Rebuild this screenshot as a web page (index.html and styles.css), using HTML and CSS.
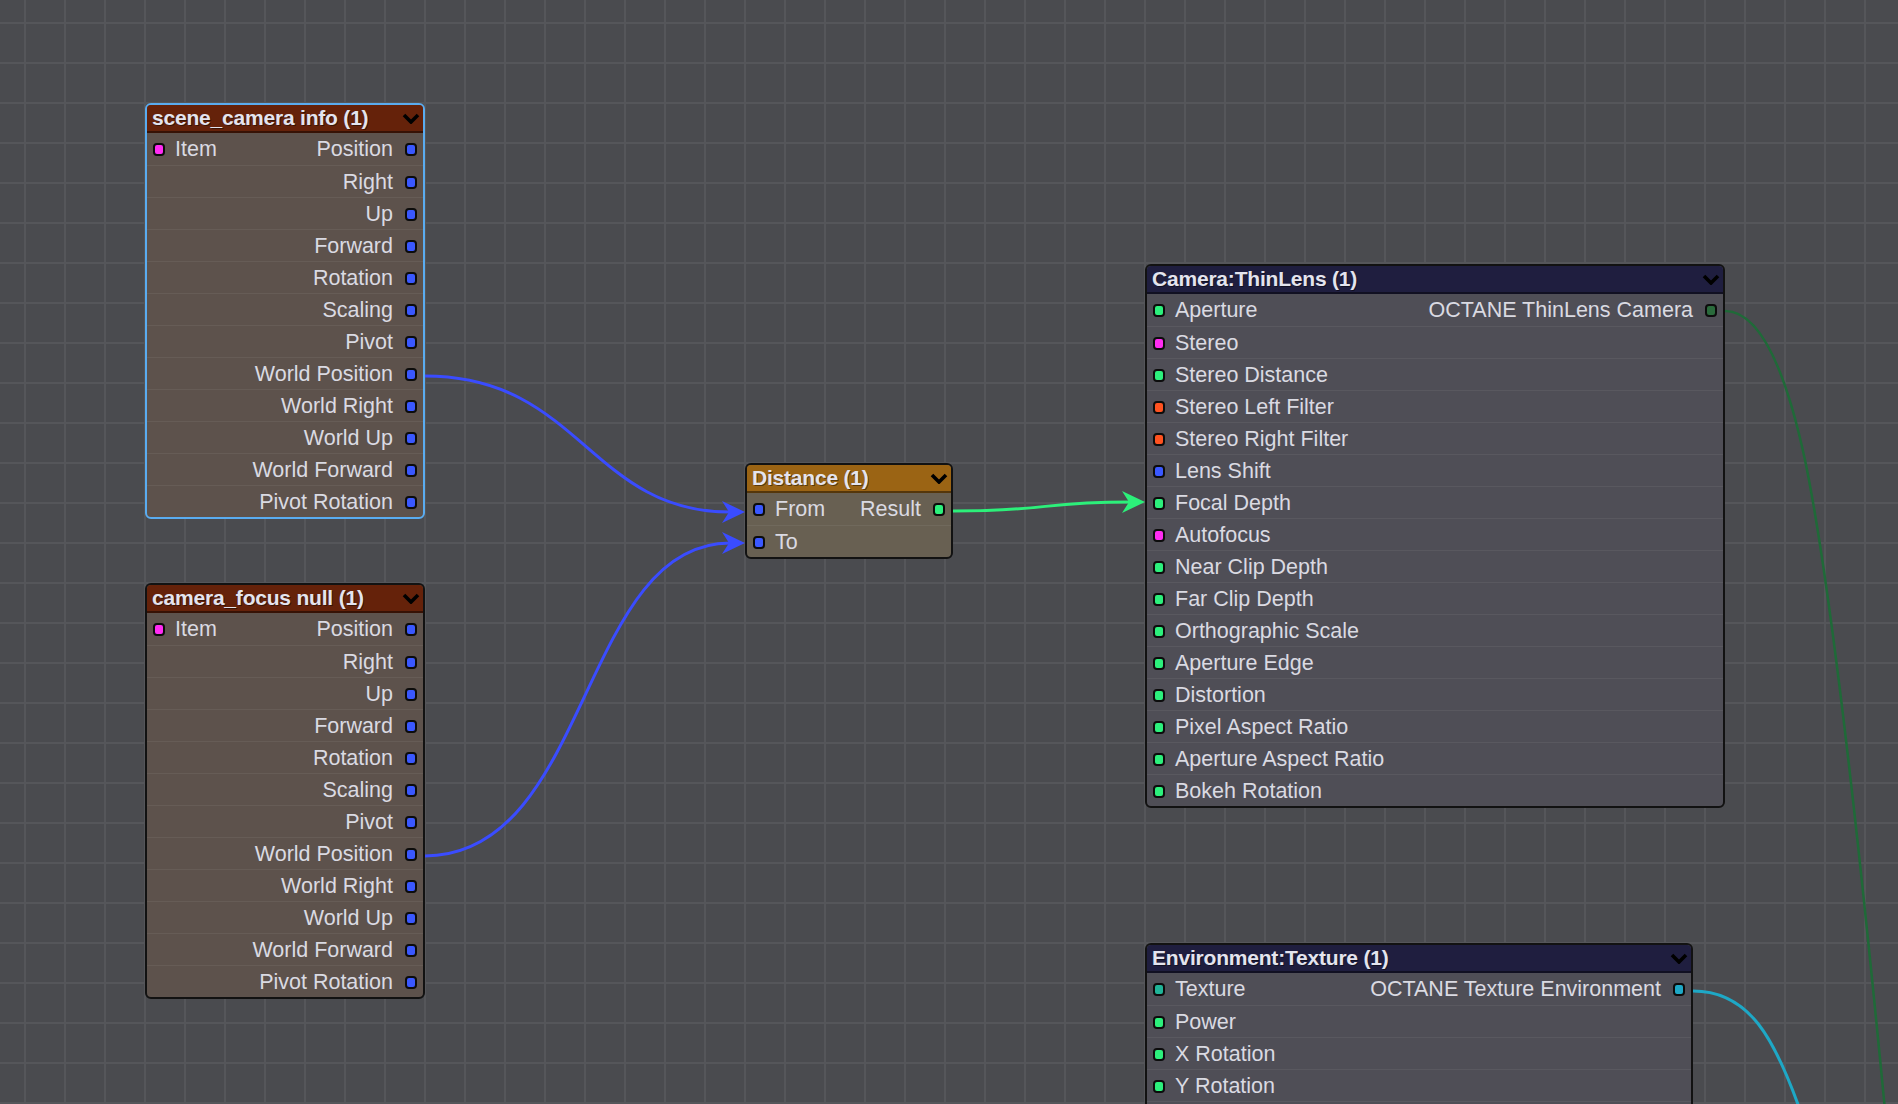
FILE: index.html
```html
<!DOCTYPE html>
<html lang="en">
<head>
    <meta charset="UTF-8">
    <title>Node Editor</title>
    <link rel="stylesheet" href="styles.css">
</head>
<body>
<div class="canvas">

    <svg class="wires" width="1898" height="1104" viewBox="0 0 1898 1104">
        <!-- world position -> distance -->
        <path class="wire blue" d="M425,376 C580,376 590,512 730,512"/>
        <path class="head blue-fill" d="M745,512 L722,501 L729,512 L722,523 Z"/>
        <path class="wire blue" d="M425,856 C590,856 580,543 730,543"/>
        <path class="head blue-fill" d="M745,543 L722,532 L729,543 L722,554 Z"/>
        <!-- distance -> focal depth -->
        <path class="wire green" d="M953,511 C1050,511 1040,502 1130,502"/>
        <path class="head green-fill" d="M1145,502 L1122,491 L1129,502 L1122,513 Z"/>
        <!-- outputs going off screen -->
        <path class="wire dkgreen" d="M1725,311 C1765,311 1790,390 1805,460 C1830,580 1860,850 1885,1110"/>
        <path class="wire teal" d="M1693,991 C1750,991 1775,1040 1800,1110"/>
    </svg>

    <!-- scene_camera info -->
    <div class="node node-item selected n-scene">
        <div class="node-head">
            <span class="node-title">scene_camera info (1)</span>
            <svg class="chev" width="18" height="11" viewBox="0 0 18 11"><path d="M2,2 L9,9 L16,2"/></svg>
        </div>
        <div class="row"><i class="sock magenta"></i><span class="lbl">Item</span><span class="lbl out">Position</span><i class="sock blue"></i></div>
        <div class="row"><span class="lbl out">Right</span><i class="sock blue"></i></div>
        <div class="row"><span class="lbl out">Up</span><i class="sock blue"></i></div>
        <div class="row"><span class="lbl out">Forward</span><i class="sock blue"></i></div>
        <div class="row"><span class="lbl out">Rotation</span><i class="sock blue"></i></div>
        <div class="row"><span class="lbl out">Scaling</span><i class="sock blue"></i></div>
        <div class="row"><span class="lbl out">Pivot</span><i class="sock blue"></i></div>
        <div class="row"><span class="lbl out">World Position</span><i class="sock blue"></i></div>
        <div class="row"><span class="lbl out">World Right</span><i class="sock blue"></i></div>
        <div class="row"><span class="lbl out">World Up</span><i class="sock blue"></i></div>
        <div class="row"><span class="lbl out">World Forward</span><i class="sock blue"></i></div>
        <div class="row"><span class="lbl out">Pivot Rotation</span><i class="sock blue"></i></div>
    </div>

    <!-- camera_focus null -->
    <div class="node node-item n-focus">
        <div class="node-head">
            <span class="node-title">camera_focus null (1)</span>
            <svg class="chev" width="18" height="11" viewBox="0 0 18 11"><path d="M2,2 L9,9 L16,2"/></svg>
        </div>
        <div class="row"><i class="sock magenta"></i><span class="lbl">Item</span><span class="lbl out">Position</span><i class="sock blue"></i></div>
        <div class="row"><span class="lbl out">Right</span><i class="sock blue"></i></div>
        <div class="row"><span class="lbl out">Up</span><i class="sock blue"></i></div>
        <div class="row"><span class="lbl out">Forward</span><i class="sock blue"></i></div>
        <div class="row"><span class="lbl out">Rotation</span><i class="sock blue"></i></div>
        <div class="row"><span class="lbl out">Scaling</span><i class="sock blue"></i></div>
        <div class="row"><span class="lbl out">Pivot</span><i class="sock blue"></i></div>
        <div class="row"><span class="lbl out">World Position</span><i class="sock blue"></i></div>
        <div class="row"><span class="lbl out">World Right</span><i class="sock blue"></i></div>
        <div class="row"><span class="lbl out">World Up</span><i class="sock blue"></i></div>
        <div class="row"><span class="lbl out">World Forward</span><i class="sock blue"></i></div>
        <div class="row"><span class="lbl out">Pivot Rotation</span><i class="sock blue"></i></div>
    </div>

    <!-- distance -->
    <div class="node node-math n-dist">
        <div class="node-head">
            <span class="node-title">Distance (1)</span>
            <svg class="chev" width="18" height="11" viewBox="0 0 18 11"><path d="M2,2 L9,9 L16,2"/></svg>
        </div>
        <div class="row"><i class="sock blue"></i><span class="lbl">From</span><span class="lbl out">Result</span><i class="sock green"></i></div>
        <div class="row"><i class="sock blue"></i><span class="lbl">To</span></div>
    </div>

    <!-- camera -->
    <div class="node node-octane n-cam">
        <div class="node-head">
            <span class="node-title">Camera:ThinLens (1)</span>
            <svg class="chev" width="18" height="11" viewBox="0 0 18 11"><path d="M2,2 L9,9 L16,2"/></svg>
        </div>
        <div class="row"><i class="sock green"></i><span class="lbl">Aperture</span><span class="lbl out">OCTANE ThinLens Camera</span><i class="sock dkgreen"></i></div>
        <div class="row"><i class="sock magenta"></i><span class="lbl">Stereo</span></div>
        <div class="row"><i class="sock green"></i><span class="lbl">Stereo Distance</span></div>
        <div class="row"><i class="sock red"></i><span class="lbl">Stereo Left Filter</span></div>
        <div class="row"><i class="sock red"></i><span class="lbl">Stereo Right Filter</span></div>
        <div class="row"><i class="sock blue"></i><span class="lbl">Lens Shift</span></div>
        <div class="row"><i class="sock green"></i><span class="lbl">Focal Depth</span></div>
        <div class="row"><i class="sock magenta"></i><span class="lbl">Autofocus</span></div>
        <div class="row"><i class="sock green"></i><span class="lbl">Near Clip Depth</span></div>
        <div class="row"><i class="sock green"></i><span class="lbl">Far Clip Depth</span></div>
        <div class="row"><i class="sock green"></i><span class="lbl">Orthographic Scale</span></div>
        <div class="row"><i class="sock green"></i><span class="lbl">Aperture Edge</span></div>
        <div class="row"><i class="sock green"></i><span class="lbl">Distortion</span></div>
        <div class="row"><i class="sock green"></i><span class="lbl">Pixel Aspect Ratio</span></div>
        <div class="row"><i class="sock green"></i><span class="lbl">Aperture Aspect Ratio</span></div>
        <div class="row"><i class="sock green"></i><span class="lbl">Bokeh Rotation</span></div>
    </div>

    <!-- environment (continues below the visible area) -->
    <div class="node node-octane n-env">
        <div class="node-head">
            <span class="node-title">Environment:Texture (1)</span>
            <svg class="chev" width="18" height="11" viewBox="0 0 18 11"><path d="M2,2 L9,9 L16,2"/></svg>
        </div>
        <div class="row"><i class="sock teal"></i><span class="lbl">Texture</span><span class="lbl out">OCTANE Texture Environment</span><i class="sock cyan"></i></div>
        <div class="row"><i class="sock green"></i><span class="lbl">Power</span></div>
        <div class="row"><i class="sock green"></i><span class="lbl">X Rotation</span></div>
        <div class="row"><i class="sock green"></i><span class="lbl">Y Rotation</span></div>
        <div class="row"></div>
    </div>

</div>
</body>
</html>
```

FILE: styles.css
```css
body {
    margin: 0;
    overflow: hidden;
    font-family: "Liberation Sans", Arial, sans-serif;
    background-color: #4a4b4f;
}
.canvas {
    position: relative;
    width: 1898px;
    height: 1104px;
    overflow: hidden;
    background-color: #4a4b4f;
    background-image:
        linear-gradient(to right, #55565a 2px, transparent 2px),
        linear-gradient(to bottom, #55565a 2px, transparent 2px);
    background-size: 40px 40px;
    background-position: 24px 22px;
}
.wires {
    position: absolute;
    left: 0;
    top: 0;
}
.wire {
    fill: none;
    stroke-width: 3;
}
.wire.blue { stroke: #3a4cff; }
.wire.green { stroke: #2cf07a; }
.wire.dkgreen { stroke: #1f6a38; stroke-width: 2.5; }
.wire.teal { stroke: #1ea8c6; }
.head { stroke: none; }
.blue-fill { fill: #3a4cff; }
.green-fill { fill: #2cf07a; }

/* nodes */
.node {
    position: absolute;
    box-sizing: border-box;
    border: 2px solid #121212;
    border-radius: 6px;
    overflow: hidden;
    color: #dadae2;
}
.node.selected {
    border-color: #5aacf0;
}
.n-scene { left: 145px; top: 103px; width: 280px; }
.n-focus { left: 145px; top: 583px; width: 280px; }
.n-dist { left: 745px; top: 463px; width: 208px; }
.n-cam { left: 1145px; top: 264px; width: 580px; }
.n-env { left: 1145px; top: 943px; width: 548px; }

.node-head {
    display: flex;
    align-items: center;
    justify-content: space-between;
    height: 26px;
    padding: 0 3px 0 5px;
    border-bottom: 2px solid rgba(0, 0, 0, 0.45);
}
.node-title {
    font-size: 21px;
    font-weight: bold;
    letter-spacing: -0.2px;
    color: #e4e4ee;
    text-shadow: 1px 1px 0 rgba(0, 0, 0, 0.45);
    white-space: nowrap;
}
.chev {
    flex: none;
}
.chev path {
    fill: none;
    stroke: #000;
    stroke-width: 3.6;
}

.node-item .node-head { background-color: #65220a; }
.node-item { background-color: #5d524c; }
.node-math .node-head { background-color: #9b6414; }
.node-math { background-color: #686052; }
.node-octane .node-head { background-color: #1f1e3f; }
.node-octane { background-color: #4f4e56; }

.row {
    display: flex;
    align-items: center;
    box-sizing: border-box;
    height: 32px;
    padding: 1px 6px 0 6px;
    border-top: 1px solid rgba(255, 255, 255, 0.06);
}
.node-head + .row {
    border-top: none;
}
.lbl {
    font-size: 21.5px;
    white-space: nowrap;
    margin-left: 10px;
}
.lbl.out {
    margin-left: auto;
    margin-right: 12px;
}
.sock {
    flex: none;
    box-sizing: border-box;
    width: 12px;
    height: 13px;
    border: 2px solid #0c0c0c;
    border-radius: 4px;
}
.sock.blue { background-color: #3a58ff; }
.sock.magenta { background-color: #ff2cf2; }
.sock.green { background-color: #2cf07c; }
.sock.red { background-color: #ff5220; }
.sock.dkgreen { background-color: #2a6a3c; }
.sock.teal { background-color: #20b498; }
.sock.cyan { background-color: #1ea8c6; }
```
